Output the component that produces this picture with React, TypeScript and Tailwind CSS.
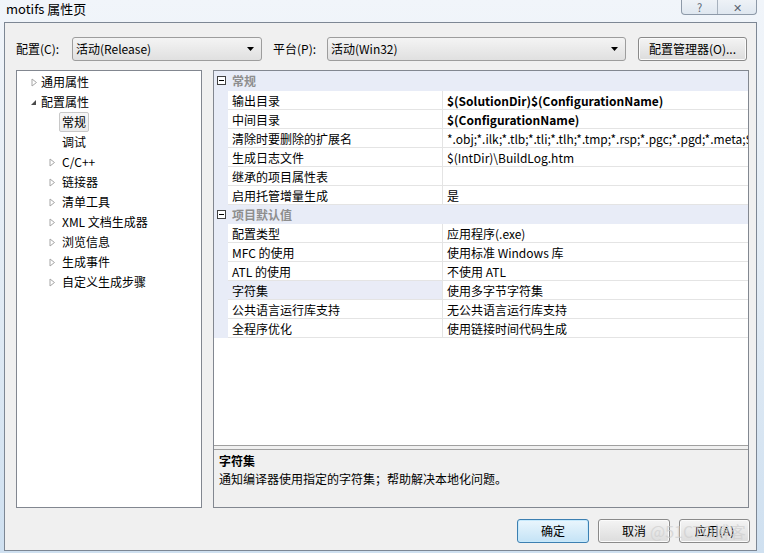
import React from 'react';

type TreeItem = { label: string; level: 0 | 1; arrow?: 'closed' | 'open'; selected?: boolean };

const treeItems: TreeItem[] = [
  { label: '通用属性', level: 0, arrow: 'closed' },
  { label: '配置属性', level: 0, arrow: 'open' },
  { label: '常规', level: 1, selected: true },
  { label: '调试', level: 1 },
  { label: 'C/C++', level: 1, arrow: 'closed' },
  { label: '链接器', level: 1, arrow: 'closed' },
  { label: '清单工具', level: 1, arrow: 'closed' },
  { label: 'XML 文档生成器', level: 1, arrow: 'closed' },
  { label: '浏览信息', level: 1, arrow: 'closed' },
  { label: '生成事件', level: 1, arrow: 'closed' },
  { label: '自定义生成步骤', level: 1, arrow: 'closed' },
];

type GridRow =
  | { kind: 'cat'; label: string; first?: boolean }
  | { kind: 'prop'; name: string; value: string; bold?: boolean; selected?: boolean };

const gridRows: GridRow[] = [
  { kind: 'cat', label: '常规', first: true },
  { kind: 'prop', name: '输出目录', value: '$(SolutionDir)$(ConfigurationName)', bold: true },
  { kind: 'prop', name: '中间目录', value: '$(ConfigurationName)', bold: true },
  { kind: 'prop', name: '清除时要删除的扩展名', value: '*.obj;*.ilk;*.tlb;*.tli;*.tlh;*.tmp;*.rsp;*.pgc;*.pgd;*.meta;$(TargetPath)' },
  { kind: 'prop', name: '生成日志文件', value: '$(IntDir)\\BuildLog.htm' },
  { kind: 'prop', name: '继承的项目属性表', value: '' },
  { kind: 'prop', name: '启用托管增量生成', value: '是' },
  { kind: 'cat', label: '项目默认值' },
  { kind: 'prop', name: '配置类型', value: '应用程序(.exe)' },
  { kind: 'prop', name: 'MFC 的使用', value: '使用标准 Windows 库' },
  { kind: 'prop', name: 'ATL 的使用', value: '不使用 ATL' },
  { kind: 'prop', name: '字符集', value: '使用多字节字符集', selected: true },
  { kind: 'prop', name: '公共语言运行库支持', value: '无公共语言运行库支持' },
  { kind: 'prop', name: '全程序优化', value: '使用链接时间代码生成' },
];

const Arrow = ({ open }: { open?: boolean }) =>
  open ? (
    <svg width="8" height="8" viewBox="0 0 8 8">
      <path d="M6 2 L6 7 L1 7 Z" fill="#4a4a4a" />
    </svg>
  ) : (
    <svg width="8" height="9" viewBox="0 0 8 9">
      <path d="M2 1 L6.5 4.5 L2 8 Z" fill="none" stroke="#a6a6a6" strokeWidth="1" />
    </svg>
  );

const Combo = ({ text, width }: { text: string; width: string }) => (
  <div
    className={`${width} h-[24px] rounded-[3px] border border-[#9d9d9d] bg-gradient-to-b from-[#f4f4f4] to-[#e0e0e0] flex items-center pl-[3px] pr-[7px]`}
  >
    <span className="flex-1 text-[12px] leading-[16px] text-black">{text}</span>
    <svg width="7" height="4" viewBox="0 0 7 4">
      <path d="M0 0 L7 0 L3.5 4 Z" fill="#000" />
    </svg>
  </div>
);

const WinButton = ({ text, width, primary }: { text: string; width: string; primary?: boolean }) => (
  <div
    className={`${width} h-[24px] rounded-[3px] border flex items-center justify-center text-[12px] leading-[16px] text-black ${
      primary
        ? 'border-[#3c7fb1] bg-gradient-to-b from-[#eaf6fd] to-[#c4e3f6] shadow-[inset_0_0_0_1px_#c6e9fc]'
        : 'border-[#8a8a8a] bg-gradient-to-b from-[#f4f4f4] to-[#dcdcdc] shadow-[inset_0_0_0_1px_#fbfbfb]'
    }`}
  >
    {text}
  </div>
);

export default function App() {
  return (
    <div className="w-[764px] h-[553px] overflow-hidden relative flex flex-col bg-gradient-to-b from-[#f1f5fa] via-[#e3ecf5] to-[#cfe0f0] font-['Noto_Sans_CJK_SC',sans-serif]">
      {/* title bar */}
      <div className="h-[22px] shrink-0 flex items-start justify-between pl-[6px] pr-[7px]">
        <span className="text-[13px] leading-[16px] mt-[1px] text-black">motifs 属性页</span>
        <div className="flex h-[15px] rounded-b-[4px] border border-t-0 border-[#8d99a8] bg-gradient-to-b from-[#eef2f7] to-[#dfe7f0] overflow-hidden">
          <div className="w-[36px] flex items-center justify-center text-[11px] leading-[12px] text-[#5a6470] border-r border-[#a7b1bd]">?</div>
          <div className="w-[38px] flex items-center justify-center text-[11px] leading-[12px] text-[#5a6470]">✕</div>
        </div>
      </div>

      {/* client area */}
      <div className="ml-[4px] mr-[7px] mb-[2px] flex-1 border border-[#7d8794] bg-[#f0f0f0] flex flex-col pl-[11px] pt-[14px] pb-[7px]">
        {/* top row */}
        <div className="h-[24px] flex items-center text-[12px] leading-[16px] text-black">
          <span className="w-[56px]">配置(C):</span>
          <Combo text="活动(Release)" width="w-[190px]" />
          <span className="ml-[11px] w-[54px]">平台(P):</span>
          <Combo text="活动(Win32)" width="w-[299px]" />
          <div className="ml-[12px]">
            <WinButton text="配置管理器(O)..." width="w-[109px]" />
          </div>
        </div>

        {/* main */}
        <div className="mt-[9px] h-[438px] flex gap-[11px]">
          {/* tree */}
          <div className="w-[186px] border border-[#828790] bg-white pt-[1px]">
            {treeItems.map((it, i) => (
              <div key={i} className="h-[20px] flex items-center text-[12px] leading-[16px] text-black">
                <div className={`${it.level === 0 ? 'ml-[13px]' : 'ml-[31px]'} w-[11px] flex items-center`}>
                  {it.arrow ? <Arrow open={it.arrow === 'open'} /> : null}
                </div>
                {it.selected ? (
                  <span className="h-[20px] px-[2px] flex items-center rounded-[2px] border border-[#c8c8c8] bg-gradient-to-b from-[#f7f7f7] to-[#ececec]">
                    {it.label}
                  </span>
                ) : (
                  <span className={it.level === 1 ? 'pl-[3px]' : ''}>{it.label}</span>
                )}
              </div>
            ))}
          </div>

          {/* property grid + description */}
          <div className="w-[536px] border border-[#828790] flex flex-col">
            <div className="flex-1 bg-white border-b border-[#a0a0a0] overflow-hidden">
              {gridRows.map((r, i) =>
                r.kind === 'cat' ? (
                  <div
                    key={i}
                    className={`${r.first ? 'h-[20px] pb-[1px]' : 'h-[19px]'} flex items-center bg-[#e8ecf7]`}
                  >
                    <div className="w-[14px] flex justify-center">
                      <svg width="9" height="9" viewBox="0 0 9 9">
                        <rect x="0.5" y="0.5" width="8" height="8" fill="#fff" stroke="#404040" />
                        <path d="M2 4.5 H7" stroke="#000" />
                      </svg>
                    </div>
                    <span className="ml-[4px] text-[12px] leading-[16px] font-bold text-[#8e8e8e]">{r.label}</span>
                  </div>
                ) : (
                  <div key={i} className="h-[19px] flex">
                    <div className="w-[14px] bg-[#e8ecf7]" />
                    <div
                      className={`w-[215px] border-b border-r border-[#e4e4e4] pl-[4px] pt-[1px] flex items-center text-[12px] leading-[16px] text-black ${
                        r.selected ? 'bg-[#e9ecf7]' : ''
                      }`}
                    >
                      {r.name}
                    </div>
                    <div
                      className={`flex-1 min-w-0 border-b border-[#e4e4e4] pl-[4px] pt-[1px] flex items-center overflow-hidden whitespace-nowrap text-[12px] leading-[16px] text-black ${
                        r.bold ? 'font-bold' : ''
                      }`}
                    >
                      {r.value}
                    </div>
                  </div>
                )
              )}
            </div>
            <div className="h-[3px] bg-[#f0f0f0]" />
            <div className="h-[58px] border-t border-[#a0a0a0] bg-[#f0f0f0] pl-[5px] pt-[2px] text-[12px] leading-[18px] text-black">
              <div className="font-bold">字符集</div>
              <div>通知编译器使用指定的字符集；帮助解决本地化问题。</div>
            </div>
          </div>
        </div>

        {/* buttons */}
        <div className="mt-[11px] w-[734px] flex justify-end gap-[9px]">
          <WinButton text="确定" width="w-[72px]" primary />
          <WinButton text="取消" width="w-[72px]" />
          <WinButton text="应用(A)" width="w-[71px]" />
        </div>
      </div>

      {/* watermark */}
      <div className="absolute left-[650px] top-[521px] text-[16px] leading-[20px] text-[#cfcfcf] opacity-70 pointer-events-none">
        @51CTO博客
      </div>
    </div>
  );
}
